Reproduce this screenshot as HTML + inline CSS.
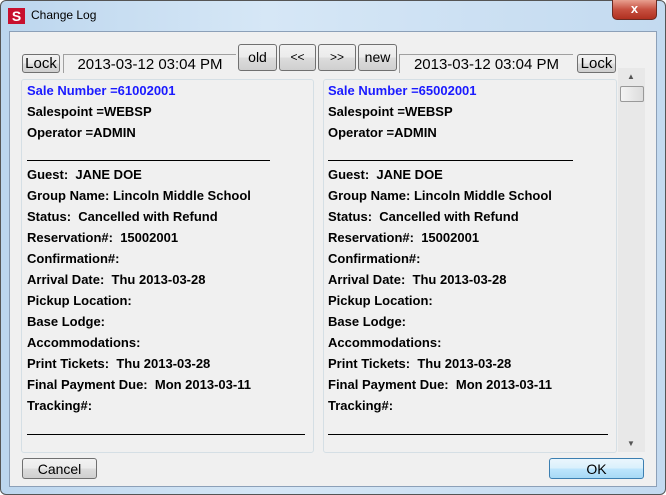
<!DOCTYPE html><html><head><style>
body{margin:0;width:666px;height:495px;overflow:hidden;background:#fff;font-family:"Liberation Sans",sans-serif}
.frame{position:absolute;left:0;top:0;width:664px;height:493px;border:1px solid #555;border-radius:6px;background:linear-gradient(90deg,#bcd6ee,#d6e7f6 40%,#c3daf0);}
.client{position:absolute;left:9px;top:31px;width:646px;height:454px;background:#f0f0f0;border:1px solid #8ca0b8}
.abs{position:absolute}
.btn{position:absolute;border:1px solid #707070;border-radius:3px;background:linear-gradient(#f2f2f2,#ebebeb 50%,#dddddd 50%,#cfcfcf);font-size:14px;text-align:center;color:#000;box-sizing:border-box}
.date{position:absolute;background:#f0f0f0;border-top:1px solid #a0a0a0;border-left:1px solid #a0a0a0;font-size:15px;text-align:center;box-sizing:border-box;line-height:18px;padding-top:1px}
.panel{position:absolute;border:1px solid #d5dfe5;border-radius:3px;background:#f0f0f0;box-sizing:border-box;overflow:hidden}
.t{position:absolute;font-weight:bold;font-size:13px;white-space:pre}
.hr{position:absolute;height:1px;background:#000}
</style></head><body>
<div class="frame"></div>
<div class="abs" style="left:8px;top:8px;width:17px;height:16px;background:#c8102e;color:#fff;font-weight:bold;font-size:14px;text-align:center;line-height:16px">S</div>
<div class="abs" style="left:31px;top:8px;font-size:12px;color:#000">Change Log</div>
<div class="abs" style="left:612px;top:0;width:43px;height:19px;border:1px solid #6b2a22;border-top:none;border-radius:0 0 5px 5px;background:linear-gradient(#e8a090,#c75040 50%,#b03020);color:#fff;font-weight:bold;text-align:center;font-size:13px;line-height:18px">x</div>
<div class="client"></div>
<div class="btn" style="left:22px;top:54px;width:38px;height:19px;line-height:17px;font-size:15px">Lock</div>
<div class="date" style="left:63px;top:54px;width:173px;height:19px">2013-03-12 03:04 PM</div>
<div class="btn" style="left:238px;top:44px;width:39px;height:27px;line-height:24px">old</div>
<div class="btn" style="left:279px;top:44px;width:37px;height:27px;line-height:24px;font-size:12px">&lt;&lt;</div>
<div class="btn" style="left:318px;top:44px;width:38px;height:27px;line-height:24px;font-size:12px">&gt;&gt;</div>
<div class="btn" style="left:358px;top:44px;width:39px;height:27px;line-height:24px">new</div>
<div class="date" style="left:399px;top:54px;width:174px;height:19px">2013-03-12 03:04 PM</div>
<div class="btn" style="left:577px;top:54px;width:39px;height:19px;line-height:17px;font-size:15px">Lock</div>
<div class="abs" style="left:618px;top:68px;width:27px;height:384px;background:#e8e8e8"></div>
<div class="abs" style="left:627px;top:72px;font-size:8px;color:#555">▲</div>
<div class="abs" style="left:627px;top:439px;font-size:8px;color:#555">▼</div>
<div class="abs" style="left:620px;top:86px;width:24px;height:16px;border:1px solid #999;border-radius:2px;background:linear-gradient(90deg,#f4f4f4,#dcdcdc);box-sizing:border-box"></div>
<div class="panel" style="left:21px;top:79px;width:293px;height:374px"></div>
<div class="panel" style="left:323px;top:79px;width:294px;height:374px"></div>
<div id="L"></div>
<script>
var lines=["Salespoint =WEBSP","Operator =ADMIN","","Guest:  JANE DOE","Group Name: Lincoln Middle School","Status:  Cancelled with Refund","Reservation#:  15002001","Confirmation#:","Arrival Date:  Thu 2013-03-28","Pickup Location:","Base Lodge:","Accommodations:","Print Tickets:  Thu 2013-03-28","Final Payment Due:  Mon 2013-03-11","Tracking#:"];
var h="";
[[27,"61002001",270,305],[328,"65002001",573,608]].forEach(function(p){
h+='<div class="t" style="left:'+p[0]+'px;top:83px;color:#1a1aff">Sale Number ='+p[1]+'</div>';
lines.forEach(function(s,i){if(s)h+='<div class="t" style="left:'+p[0]+'px;top:'+(104+21*i)+'px">'+s+'</div>';});
h+='<div class="hr" style="left:'+p[0]+'px;top:160px;width:'+(p[2]-p[0])+'px"></div>';
h+='<div class="hr" style="left:'+p[0]+'px;top:434px;width:'+(p[3]-p[0])+'px"></div>';
});
document.getElementById("L").innerHTML=h;
</script>
<div class="btn" style="left:22px;top:458px;width:75px;height:21px;line-height:20px">Cancel</div>
<div class="btn" style="left:549px;top:458px;width:95px;height:21px;line-height:20px;border-color:#3c7fb1;background:linear-gradient(#eaf6fd,#d9f0fc 50%,#bee6fd 50%,#a7d9f5)">OK</div>
</body></html>
